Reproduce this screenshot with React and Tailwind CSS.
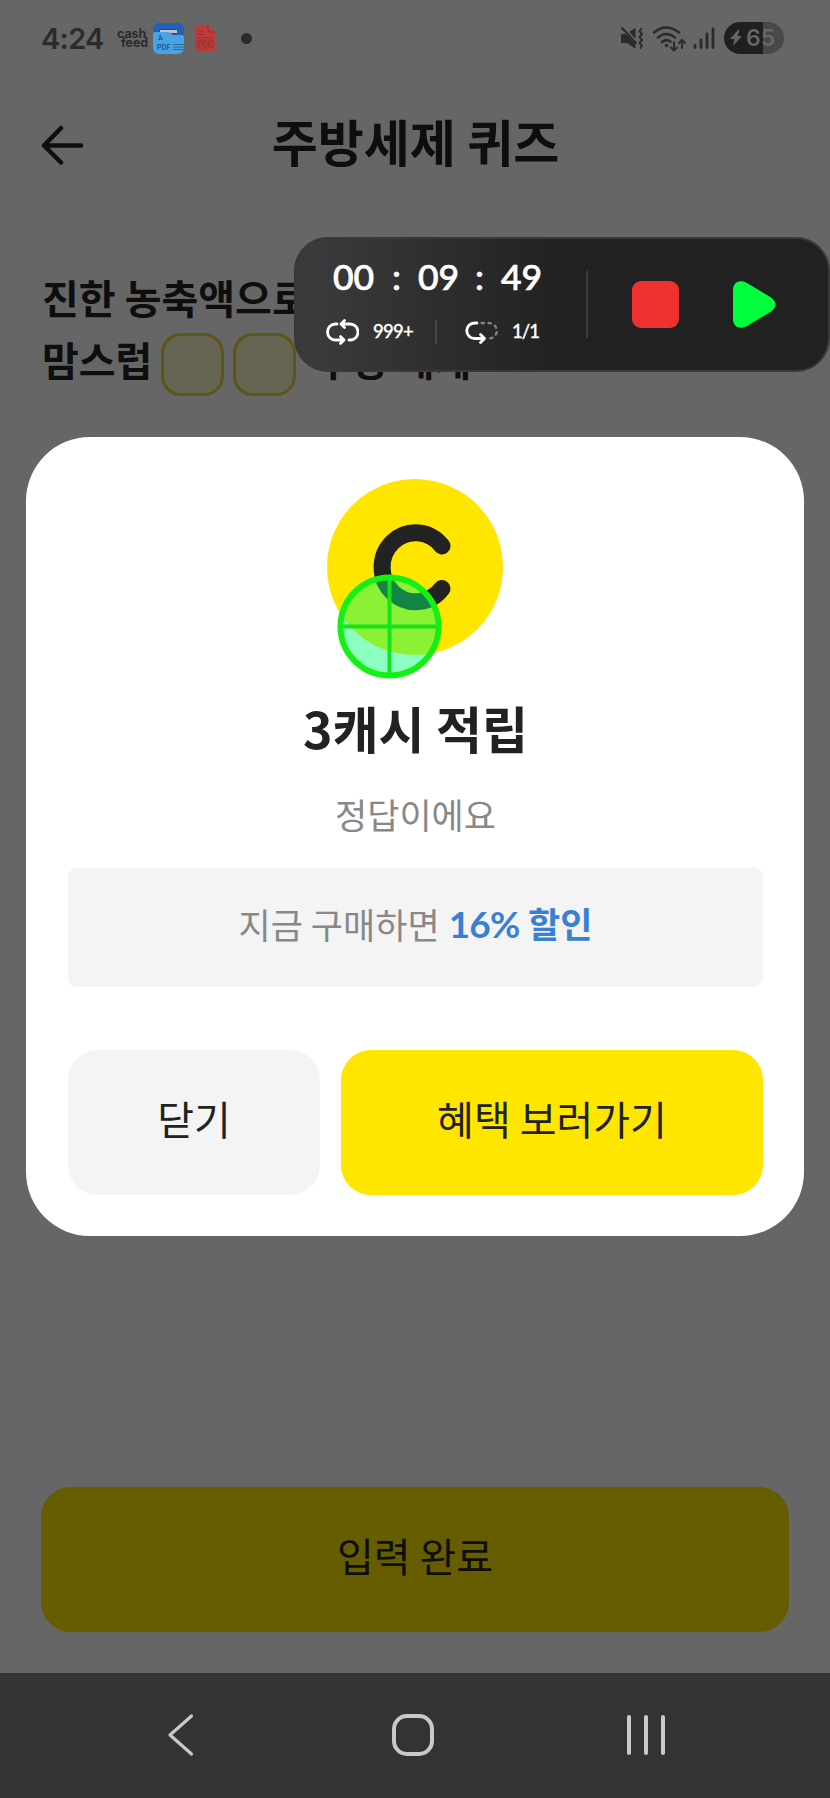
import React from "react";

const StatusBar = () => {
  return (
    <div className="h-[76px] flex items-center justify-between pl-[41px] pr-[46px] text-[#2b2b2b]">
      <div className="flex items-center">
        <span className="w-[76px] font-[Inter] font-semibold text-[29px] leading-none tracking-[-0.7px]">
          4:24
        </span>
        <div className="w-[36px] pb-[1px] font-[Inter] font-bold text-[12.500px] leading-[9px] tracking-[-0.1px]">
          <p className="h-[9px]">cash</p>
          <p className="h-[9px] pl-[4px]">feed</p>
        </div>
        <svg className="w-[31px] h-[31px]" viewBox="0 0 31 31">
          <rect width="31" height="31" rx="6" fill="#1f62bd" />
          <rect x="6.500" y="6.500" width="18" height="4" rx="1" fill="#c9c4bb" stroke="#29466e" />
          <path
            d="M0 11a2 2 0 0 1 2-2h14l4 3h9a2 2 0 0 1 2 2V25a6 6 0 0 1-6 6H6a6 6 0 0 1-6-6z"
            fill="#4aa3e4"
          />
          <path d="M5 17q3-1 2-5q1 4 3 4q-3 0-5 1" stroke="#1d5683" fill="none" />
          <path d="M20 21.500h11M20 24h11M20 26.500h11" stroke="#296c9c" />
          <text x="4" y="27" fontSize="7" fontWeight="700" fontFamily="Inter" fill="#1f5f90">
            PDF
          </text>
        </svg>
        <svg className="w-[20px] h-[27px] ml-[11px]" viewBox="0 0 20 27">
          <path d="M2 0h11l7 7v18a2 2 0 0 1-2 2H2a2 2 0 0 1-2-2V2a2 2 0 0 1 2-2z" fill="#c23a3a" />
          <path d="M13 0v5a2 2 0 0 0 2 2h5M2 6h7M2 9.500h8M2 12.500h14" stroke="#8f3434" fill="none" />
          <rect x="2" y="15" width="16" height="8" fill="none" stroke="#953737" />
          <text x="3" y="22" fontSize="7" fontWeight="700" fontFamily="Inter" fill="#8f3434">
            PDF
          </text>
        </svg>
        <span className="w-[11px] h-[11px] ml-[26px] rounded-full bg-[#2b2b2b]" />
      </div>

      <div className="flex items-center">
        <svg className="w-[24px] h-[24px]" viewBox="0 0 24 24" fill="none" stroke="currentColor">
          <path d="M1.500 8.500H6L15 18v4L7 16.500H1.500z" fill="currentColor" strokeLinejoin="round" />
          <path d="M10 6l5-3.500V12z" fill="currentColor" strokeLinejoin="round" />
          <path d="M2 2l14 15" strokeWidth="2" strokeLinecap="round" />
          <path
            d="M21.500 2.500l-2 2.500 2.500 3-2.500 3 2.500 3-2.500 3 2.500 3-1.500 2"
            strokeWidth="2"
            strokeLinecap="round"
            strokeLinejoin="round"
          />
        </svg>
        <svg
          className="w-[36px] h-[28px] ml-[7px]"
          viewBox="0 0 36 28"
          fill="none"
          stroke="currentColor"
          strokeWidth="2.500"
          strokeLinecap="round"
        >
          <path d="M3 8.500q12-10 25 0M7 13.500q8.500-7 17 0M11 18q4.500-3.500 8.500-.5" />
          <circle cx="15.500" cy="21.500" r="1.800" fill="currentColor" stroke="none" />
          <g strokeWidth="2">
            <path d="M23 18v8M20 23.500l3 3 3-3M31 24v-8M28 19l3-3 3 3" />
          </g>
        </svg>
        <svg
          className="w-[24px] h-[24px] ml-[4px]"
          viewBox="0 0 24 24"
          stroke="currentColor"
          strokeWidth="2.800"
          strokeLinecap="round"
        >
          <path d="M4 19.500v2M10 14v7.500M16 8v13.500M22 3v18.500" />
        </svg>
        <div className="w-[60px] h-[32px] ml-[9px] rounded-full flex items-center bg-linear-to-r from-[#1f1f1f] from-65% to-[#484848] to-65%">
          <svg className="w-[12px] h-[16px] ml-[6px]" viewBox="0 0 12 16">
            <path d="M8 0L0 9h4.500L3 16l9-10H7.500L9.500 0z" fill="#666666" />
          </svg>
          <span className="ml-[4px] font-[Inter] font-semibold text-[23px] leading-none text-[#666666]">
            65
          </span>
        </div>
      </div>
    </div>
  );
};

const RecorderWidget = () => {
  return (
    <div className="absolute left-[294px] top-[237px] w-[536px] h-[135px] rounded-[34px] border-2 border-[#393939] bg-linear-to-r from-[#3a3a3c] from-5% to-[#212121] to-50% flex items-center text-white font-[Lato]">
      <div className="w-[290px] h-full shrink-0 flex flex-col">
        <div className="flex h-[50px] mt-[13px] pl-[37px] items-center text-[35.500px] leading-none font-medium [-webkit-text-stroke:0.7px_white]">
          <span className="w-[59px]">00</span>
          <span className="w-[26px]">:</span>
          <span className="w-[57px]">09</span>
          <span className="w-[26px]">:</span>
          <span>49</span>
        </div>
        <div className="flex items-center h-[26px] mt-[17px] pl-[30px] text-[18.500px] leading-none font-medium [-webkit-text-stroke:0.3px_white]">
          <svg
            className="w-[33px] h-[26px] shrink-0"
            viewBox="0 0 33 26"
            fill="none"
            stroke="currentColor"
            strokeWidth="2.800"
            strokeLinecap="round"
            strokeLinejoin="round"
          >
            <path d="M11 5H9.500a7.500 7.500 0 0 0 0 16H17M14.500 17.500l3.500 3.500-3.500 3.500" />
            <path d="M23 21h1a7.500 7.500 0 0 0 0-16h-8M18.500 1.500L15 5l3.500 3.500" />
          </svg>
          <span className="w-[76px] shrink-0 pl-[14px] pb-[2px] tracking-[-0.7px]">999+</span>
          <span className="w-[2px] h-[24px] bg-[#454545]" />
          <svg
            className="w-[33px] h-[26px] ml-[28px] shrink-0"
            viewBox="0 0 33 26"
            fill="none"
            stroke="currentColor"
            strokeWidth="2.800"
            strokeLinecap="round"
            strokeLinejoin="round"
          >
            <path d="M12 4H9.500a7.500 7.500 0 0 0 0 15.500H19M15.500 15.500l4 4-4 4" />
            <path
              d="M16.500 4H24a7.500 7.500 0 0 1 0 15.500h-1"
              stroke="#858585"
              strokeWidth="2.300"
              strokeDasharray="2.500 4.500"
            />
          </svg>
          <span className="pl-[14px] pb-[2px] tracking-[-1px]">1/1</span>
        </div>
      </div>
      <span className="w-[2px] h-[67px] bg-[#3d3d3d]" />
      <span className="w-[47px] h-[47px] ml-[44px] rounded-[9px] bg-[#ee3031]" />
      <svg className="w-[43px] h-[47px] ml-[54px]" viewBox="0 0 43 47">
        <path
          d="M0 9C0 1 7-2 14 2L38 16.500Q47 23.500 38 30.500L14 45C7 49 0 46 0 38z"
          fill="#00ff3c"
        />
      </svg>
    </div>
  );
};

const RewardModal = () => {
  return (
    <div className="absolute left-[26px] top-[437px] w-[778px] h-[799px] rounded-[64px] bg-white pl-[42px] pr-[41px] pt-[41px] flex flex-col">
      <svg className="w-[178px] h-[178px] ml-[258px]" viewBox="0 0 178 178">
        <circle cx="89" cy="89" r="88" fill="#ffe600" />
        <path
          d="M116 68A33.500 34.500 0 1 0 116 110.500"
          fill="none"
          stroke="#222222"
          strokeWidth="17"
          strokeLinecap="round"
        />
      </svg>
      <h2 className="mt-[35px] text-center text-[50px] leading-[72px] font-bold text-[#222222]">
        3캐시 적립
      </h2>
      <p className="mt-[26px] text-center text-[35px] leading-[50px] text-[#888888]">
        정답이에요
      </p>
      <div className="mt-[29px] h-[119px] pb-[8px] shrink-0 rounded-[9px] bg-[#f4f4f4] flex items-center justify-center gap-[9px] text-[35px] leading-[50px] text-[#888888]">
        <span>지금 구매하면</span>
        <strong className="text-[#3a80d2] font-[Lato,'Noto_Sans_CJK_KR',sans-serif]">
          <span className="text-[37px] tracking-[-0.8px]">16%</span> 할인
        </strong>
      </div>
      <div className="mt-[63px] flex gap-[21px] text-[40px] leading-[58px] text-[#222222]">
        <button className="w-[252px] h-[145px] pb-[9px] rounded-[30px] bg-[#f4f4f4]">닫기</button>
        <button className="flex-1 h-[145px] pb-[9px] rounded-[30px] bg-[#ffe600]">
          혜택 보러가기
        </button>
      </div>
    </div>
  );
};

const TouchPointer = () => {
  return (
    <svg className="absolute left-[337px] top-[574px] w-[105px] h-[105px]" viewBox="0 0 105 105">
      <circle cx="52.500" cy="52.500" r="49" fill="#00ff73" fillOpacity="0.45" />
      <path d="M52.500 4v97M4 52.500h97" stroke="#14e51a" strokeWidth="4" />
      <circle cx="52.500" cy="52.500" r="49" fill="none" stroke="#14f014" strokeWidth="6" />
    </svg>
  );
};

const NavigationBar = () => {
  return (
    <div className="h-[125px] pb-[2px] bg-[#333333] flex items-center pl-[164px]">
      <svg className="w-[32px] h-[44px]" viewBox="0 0 32 44" fill="none" stroke="#c9c9c9">
        <path d="M27.500 3L6 22l21.500 19" strokeWidth="3.200" strokeLinecap="round" strokeLinejoin="round" />
      </svg>
      <span className="w-[42px] h-[42px] ml-[196px] rounded-[15px] border-4 border-[#c9c9c9]" />
      <div className="flex gap-[13px] ml-[193px]">
        <span className="w-[4px] h-[40px] rounded-full bg-[#c9c9c9]" />
        <span className="w-[4px] h-[40px] rounded-full bg-[#c9c9c9]" />
        <span className="w-[4px] h-[40px] rounded-full bg-[#c9c9c9]" />
      </div>
    </div>
  );
};

const App = () => {
  return (
    <div className="relative w-[830px] h-[1798px] overflow-hidden flex flex-col bg-[#666666] font-['Noto_Sans_CJK_KR',sans-serif] text-[#0e0e0e]">
      <StatusBar />

      <header className="h-[138px] flex items-center px-[41px]">
        <svg
          className="w-[43px] h-[40px]"
          viewBox="0 0 43 40"
          fill="none"
          stroke="currentColor"
          strokeWidth="4.500"
          strokeLinecap="round"
          strokeLinejoin="round"
        >
          <path d="M40 20.500H3M20 3L3 20.500l17 17" />
        </svg>
        <h1 className="flex-1 pr-[42px] pb-[11px] text-center text-[50px] leading-[72px] font-bold">
          주방세제 퀴즈
        </h1>
      </header>

      <main className="flex-1 pl-[42px] pt-[52px] text-[40px] font-bold">
        <p className="h-[62px] leading-[62px]">진한 농축액으로</p>
        <div className="h-[72px] flex items-center">
          <span className="w-[119px] leading-[62px] pb-[11px]">맘스럽</span>
          <span className="w-[63px] h-[63px] rounded-[20px] border-[3px] border-[#5e5519] bg-[#666452]" />
          <span className="w-[63px] h-[63px] ml-[9px] rounded-[20px] border-[3px] border-[#5e5519] bg-[#666452]" />
          <span className="ml-[19px] leading-[62px] pb-[11px]">주방 세제</span>
        </div>
      </main>

      <div className="px-[41px] pb-[41px]">
        <button className="w-full h-[145px] pb-[9px] rounded-[30px] bg-[#665c00] text-[40px] leading-[58px]">
          입력 완료
        </button>
      </div>

      <NavigationBar />

      <RewardModal />
      <RecorderWidget />
      <TouchPointer />
    </div>
  );
};

export default App;
